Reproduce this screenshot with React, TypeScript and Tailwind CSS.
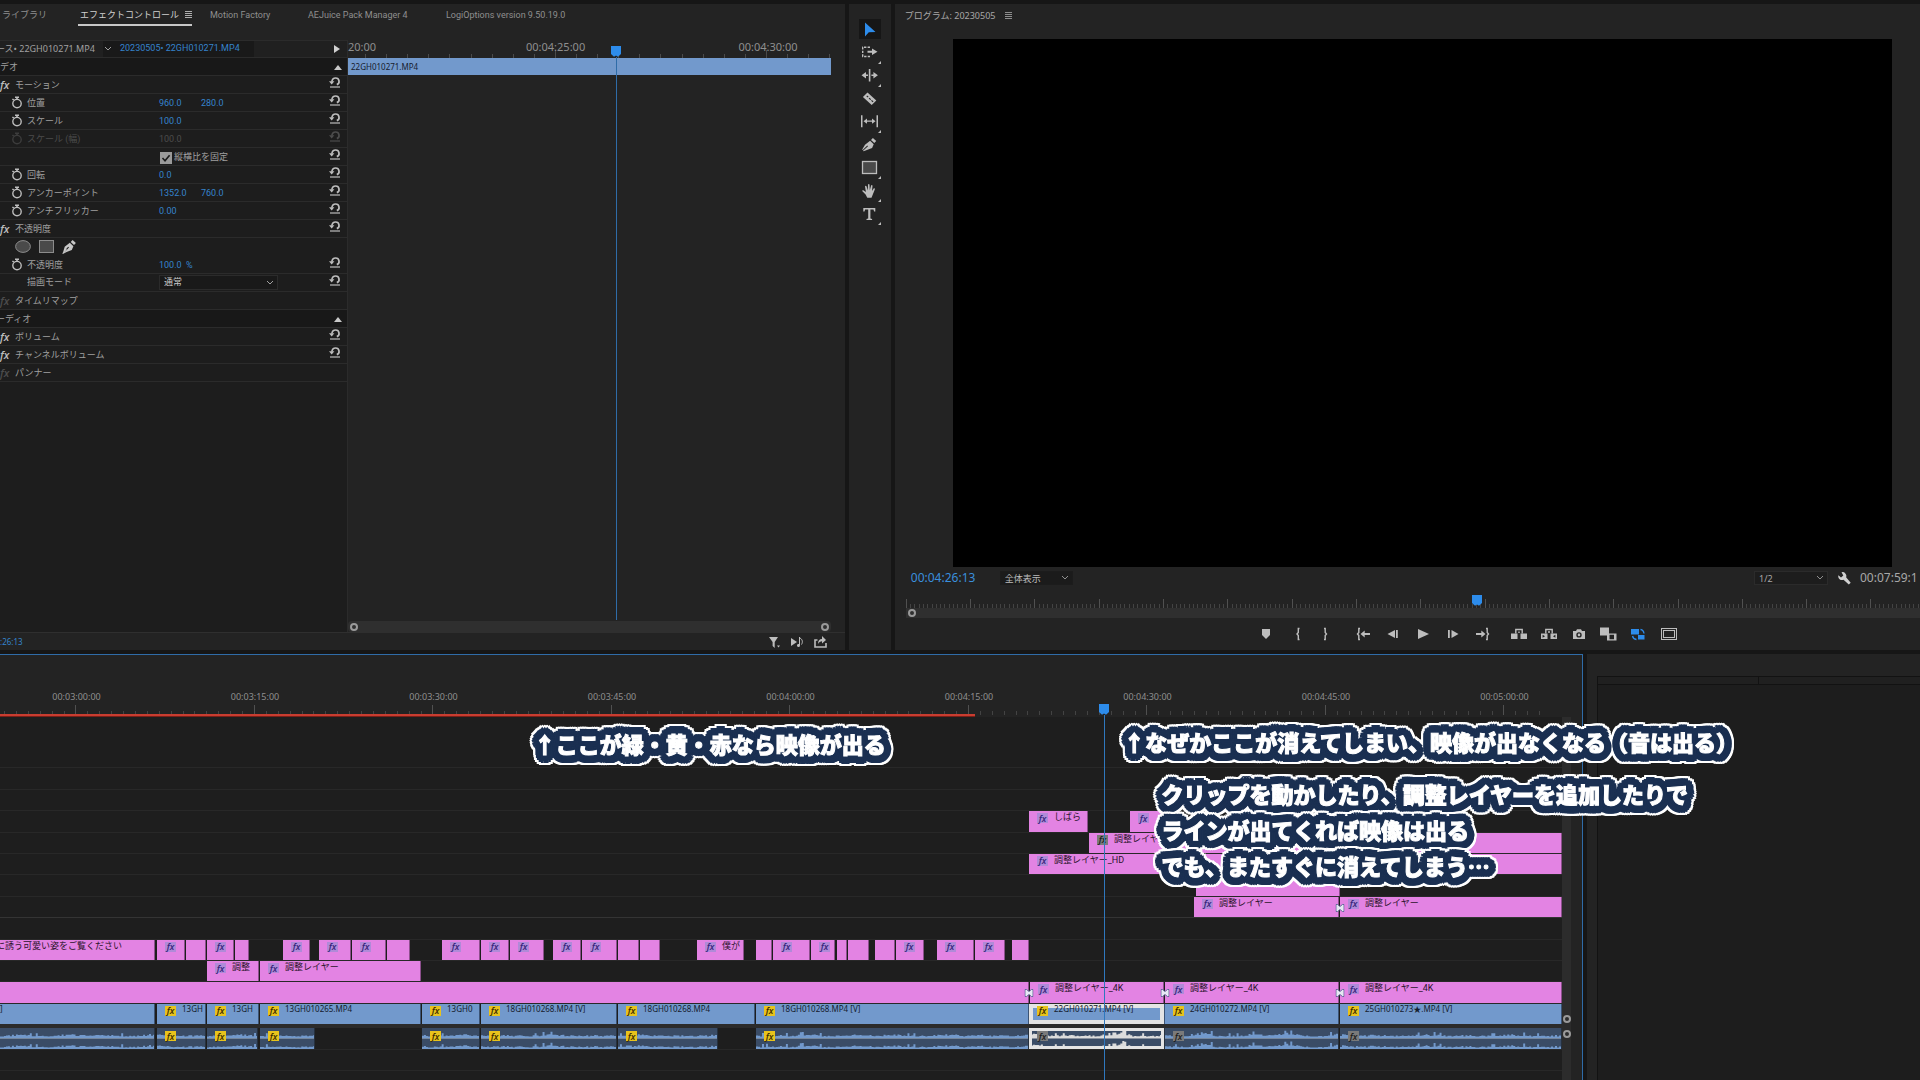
import React from 'react';

type Badge = 'violet' | 'yellow' | 'gray';

interface Clip {
  from: number;
  to: number;
  label?: string;
  badge?: Badge;
  selected?: boolean;
}

interface EffectRow {
  label?: string;
  kind: 'section' | 'effect' | 'param' | 'check' | 'masks' | 'select';
  values?: string[];
  disabled?: boolean;
  noReset?: boolean;
}

// Length of the visible part of the sequence, in timeline units
const SPAN = 1562;
const pct = (value: number) => `${(value / SPAN) * 100}%`;

const EFFECT_ROWS: EffectRow[] = [
  { kind: 'section', label: 'デオ' },
  { kind: 'effect', label: 'モーション' },
  { kind: 'param', label: '位置', values: ['960.0', '280.0'] },
  { kind: 'param', label: 'スケール', values: ['100.0'] },
  { kind: 'param', label: 'スケール (幅)', values: ['100.0'], disabled: true },
  { kind: 'check', label: '縦横比を固定' },
  { kind: 'param', label: '回転', values: ['0.0'] },
  { kind: 'param', label: 'アンカーポイント', values: ['1352.0', '760.0'] },
  { kind: 'param', label: 'アンチフリッカー', values: ['0.00'] },
  { kind: 'effect', label: '不透明度' },
  { kind: 'masks' },
  { kind: 'param', label: '不透明度', values: ['100.0  %'] },
  { kind: 'select', label: '描画モード' },
  { kind: 'effect', label: 'タイムリマップ', disabled: true, noReset: true },
  { kind: 'section', label: 'ーディオ' },
  { kind: 'effect', label: 'ボリューム' },
  { kind: 'effect', label: 'チャンネルボリューム' },
  { kind: 'effect', label: 'パンナー', disabled: true, noReset: true },
];

const VIDEO_TRACKS: Clip[][] = [
  [],
  [],
  [
    { from: 1029, to: 1088, label: 'しばら', badge: 'violet' },
    { from: 1130, to: 1170, badge: 'violet' },
  ],
  [{ from: 1089, to: 1562, label: '調整レイヤー', badge: 'gray' }],
  [{ from: 1029, to: 1562, label: '調整レイヤー_HD', badge: 'violet' }],
  [{ from: 1196, to: 1340 }],
  [
    { from: 1194, to: 1339, label: '調整レイヤー', badge: 'violet' },
    { from: 1340, to: 1562, label: '調整レイヤー', badge: 'violet' },
  ],
  [],
  [
    { from: 0, to: 155, label: 'に誘う可愛い姿をご覧ください' },
    { from: 157, to: 185, badge: 'violet' },
    { from: 186, to: 206 },
    { from: 207, to: 234, badge: 'violet' },
    { from: 235, to: 249 },
    { from: 283, to: 310, badge: 'violet' },
    { from: 319, to: 351, badge: 'violet' },
    { from: 352, to: 386, badge: 'violet' },
    { from: 387, to: 410 },
    { from: 442, to: 480, badge: 'violet' },
    { from: 481, to: 509, badge: 'violet' },
    { from: 510, to: 544, badge: 'violet' },
    { from: 553, to: 581, badge: 'violet' },
    { from: 582, to: 617, badge: 'violet' },
    { from: 618, to: 639 },
    { from: 640, to: 660 },
    { from: 697, to: 744, label: '僕が', badge: 'violet' },
    { from: 756, to: 772 },
    { from: 773, to: 810, badge: 'violet' },
    { from: 811, to: 835, badge: 'violet' },
    { from: 837, to: 847 },
    { from: 848, to: 869 },
    { from: 875, to: 895 },
    { from: 896, to: 924, badge: 'violet' },
    { from: 937, to: 974, badge: 'violet' },
    { from: 975, to: 1005, badge: 'violet' },
    { from: 1012, to: 1029 },
  ],
  [
    { from: 207, to: 259, label: '調整', badge: 'violet' },
    { from: 260, to: 421, label: '調整レイヤー', badge: 'violet' },
  ],
  [
    { from: 0, to: 1029 },
    { from: 1030, to: 1164, label: '調整レイヤー_4K', badge: 'violet' },
    { from: 1165, to: 1339, label: '調整レイヤー_4K', badge: 'violet' },
    { from: 1340, to: 1562, label: '調整レイヤー_4K', badge: 'violet' },
  ],
  [
    { from: 0, to: 155, label: ']' },
    { from: 157, to: 206, label: '13GH', badge: 'yellow' },
    { from: 207, to: 259, label: '13GH', badge: 'yellow' },
    { from: 260, to: 421, label: '13GH010265.MP4', badge: 'yellow' },
    { from: 422, to: 480, label: '13GH0', badge: 'yellow' },
    { from: 481, to: 617, label: '18GH010268.MP4 [V]', badge: 'yellow' },
    { from: 618, to: 755, label: '18GH010268.MP4', badge: 'yellow' },
    { from: 756, to: 1029, label: '18GH010268.MP4 [V]', badge: 'yellow' },
    { from: 1029, to: 1165, label: '22GH010271.MP4 [V]', badge: 'yellow', selected: true },
    { from: 1165, to: 1339, label: '24GH010272.MP4 [V]', badge: 'yellow' },
    { from: 1340, to: 1562, label: '25GH010273★.MP4 [V]', badge: 'yellow' },
  ],
];

const AUDIO_CLIPS: Clip[] = [
  { from: 0, to: 155 },
  { from: 157, to: 206, badge: 'yellow' },
  { from: 207, to: 258, badge: 'yellow' },
  { from: 260, to: 315, badge: 'yellow' },
  { from: 422, to: 480, badge: 'yellow' },
  { from: 481, to: 617, badge: 'yellow' },
  { from: 618, to: 718, badge: 'yellow' },
  { from: 756, to: 1029, badge: 'yellow' },
  { from: 1029, to: 1165, badge: 'gray', selected: true },
  { from: 1165, to: 1339, badge: 'gray' },
  { from: 1340, to: 1562, badge: 'gray' },
];

const TRANSITIONS = [
  { track: 6, at: 1340 },
  { track: 10, at: 1029 },
  { track: 10, at: 1165 },
  { track: 10, at: 1340 },
];

const TIME_LABELS = [
  '00:03:00:00',
  '00:03:15:00',
  '00:03:30:00',
  '00:03:45:00',
  '00:04:00:00',
  '00:04:15:00',
  '00:04:30:00',
  '00:04:45:00',
  '00:05:00:00',
];

/* ---------- icons ---------- */

const Svg: React.FC<{ w: number; h: number; className?: string; children: React.ReactNode }> = ({ w, h, className, children }) => (
  <svg width={w} height={h} viewBox={`0 0 ${w} ${h}`} className={`block shrink-0 ${className ?? ''}`} fill="currentColor" aria-hidden="true">
    {children}
  </svg>
);

const Chevron = () => (
  <Svg w={8} h={6}>
    <path d="M1 1l3 3 3-3" fill="none" stroke="currentColor" />
  </Svg>
);

const MenuIcon = () => (
  <Svg w={7} h={8}>
    <path d="M0 .5h7M0 2.5h7M0 4.5h7M0 6.5h7" stroke="currentColor" strokeWidth=".8" />
  </Svg>
);

const Stopwatch = () => (
  <Svg w={12} h={13}>
    <circle cx="6" cy="7.6" r="4.2" fill="none" stroke="currentColor" strokeWidth="1.4" />
    <path d="M4 .6h4v1.4H6.8v1.6H5.2V2H4zM.9 3.4l1-1 1.4 1.2-1 1z" />
  </Svg>
);

const ResetIcon = () => (
  <Svg w={12} h={11}>
    <path d="M2.8 4.6C3.2 2.2 4.8 1 6.6 1a3.4 3.4 0 0 1 1.2 6.6" fill="none" stroke="currentColor" strokeWidth="1.7" />
    <path d="M0 4.2h5.4L2.7 7.4z" />
    <path d="M1 10h10" stroke="currentColor" strokeWidth="1.2" />
  </Svg>
);

const PenIcon = () => (
  <Svg w={14} h={14}>
    <path d="M8.7 1.9L10.6 0l3.3 3.1-1.9 2z" />
    <path d="M7.8 2.7l3.6 3.5-1.6 3.7-5.2 2.2L.9 13.9l-.6-.6L4.2 9l.6.6-3 3.3L7 7.6 6.2 6.8 1 12.4l1.7-5.7z" />
  </Svg>
);

const PlayheadMark: React.FC<{ className?: string }> = ({ className }) => (
  <Svg w={10} h={11} className={className}>
    <path d="M0 0h10v8L7 10.8 5 9.4 3 10.8 0 8z" />
  </Svg>
);

const TOOLS: { name: string; icon: React.ReactNode; menu?: boolean }[] = [
  { name: '選択ツール', icon: <path d="M4 2.5v14l3.8-4.3 6.7-.2z" /> },
  {
    name: 'トラックの前方選択ツール',
    menu: true,
    icon: (
      <>
        <path d="M9 4.2H1.7v9.3H9" fill="none" stroke="currentColor" strokeWidth="1.4" strokeDasharray="2.4 1.2" />
        <path d="M6.5 7.8H11V5.5l5.5 3.3-5.5 3.3V9.8H6.5z" />
      </>
    ),
  },
  {
    name: 'リップルツール',
    menu: true,
    icon: <path d="M7.8 3h1.6v12.5H7.8zM.5 9.2L5 6v2.4h2V10H5v2.4zM16.9 9.2L12.4 6v2.4h-2V10h2v2.4z" />,
  },
  {
    name: 'レーザーツール',
    icon: <path fillRule="evenodd" d="M1.9 8L6.5 3.5l8.8 8-4.6 4.6zM5.3 7.2l1.5 1.4.8-.8-1.5-1.4zM7.7 9.5l1.6 1.5.8-.8-1.6-1.5zM10.1 11.8l1.6 1.5.8-.8-1.6-1.5z" />,
  },
  {
    name: 'スリップツール',
    menu: true,
    icon: <path d="M0 3.3h1.5v12H0zM15.5 3.3H17v12h-1.5zM2.5 9.2L6 6.6v2h5v-2l3.5 2.6-3.5 2.6v-2H6v2z" />,
  },
  {
    name: 'ペンツール',
    icon: (
      <>
        <path d="M10 4.9L11.9 3l3.3 3.1-1.9 2z" />
        <path d="M9.1 5.7l3.6 3.5-1.6 3.7-5.2 2.2-3.3 1.2-.6-.6L7 11.3l-.7-.7L1.7 15l-.5-.5L4 9.7z" />
      </>
    ),
  },
  {
    name: '長方形ツール',
    menu: true,
    icon: <rect x="1.5" y="3.5" width="14" height="12" fill="#4a4a4a" stroke="currentColor" strokeWidth="1.3" />,
  },
  {
    name: '手のひらツール',
    menu: true,
    icon: <path d="M6.3 16.8L4.6 13.6 1.4 10.3c-.5-.8.5-1.5 1.3-.9l2.2 1.7L4 5.5c0-1 1.2-1.2 1.5-.2l1.3 4.2.2-5.7c.1-1 1.4-1 1.5 0l.3 5.5 1.3-4.7c.3-.9 1.5-.7 1.4.3l-.5 5 1.5-2.2c.6-.8 1.7-.2 1.3.7l-2 5-1.3 3.4z" />,
  },
  {
    name: '横書き文字ツール',
    menu: true,
    icon: <path d="M2.3 4h12v3.6h-1.2l-.6-2.1H9.4v9l1.7.4V16H5.5v-1.1l1.7-.4v-9H4.1l-.6 2.1H2.3z" />,
  },
];

const TRANSPORT: { name: string; icon: React.ReactNode; gap: string; active?: boolean }[] = [
  { name: 'マーカーを追加', gap: '', icon: <path d="M5 4h8v6l-4 4-4-4z" /> },
  { name: 'インをマーク', gap: 'ml-3.5', icon: <path d="M10.5 3.5H9.3v4L8 9l1.3 1.5v4h1.2" fill="none" stroke="currentColor" strokeWidth="1.4" /> },
  { name: 'アウトをマーク', gap: 'ml-2.5', icon: <path d="M7 3.5h1.2v4L9.5 9l-1.3 1.5v4H7" fill="none" stroke="currentColor" strokeWidth="1.4" /> },
  {
    name: 'インへ移動',
    gap: 'ml-5',
    icon: (
      <>
        <path d="M5 3.5H3.8v4L2.5 9l1.3 1.5v4H5" fill="none" stroke="currentColor" strokeWidth="1.4" />
        <path d="M5.5 9l4.2-3.5V8H15v2H9.7v2.5z" />
      </>
    ),
  },
  { name: '1フレーム前へ戻る', gap: 'ml-[11px]', icon: <path d="M3.5 9L11 5v8zM12 5h1.8v8H12z" /> },
  { name: '再生', gap: 'ml-3', icon: <path d="M4 4l11 5-11 5z" /> },
  { name: '1フレーム先へ進む', gap: 'ml-3', icon: <path d="M14.5 9l-7-4v8zM4 5h1.8v8H4z" /> },
  {
    name: 'アウトへ移動',
    gap: 'ml-[11px]',
    icon: (
      <>
        <path d="M13 3.5h1.2v4L15.5 9l-1.3 1.5v4H13" fill="none" stroke="currentColor" strokeWidth="1.4" />
        <path d="M12.5 9L8.3 5.5V8H3v2h5.3v2.5z" />
      </>
    ),
  },
  {
    name: 'リフト',
    gap: 'ml-[19px]',
    icon: (
      <>
        <path d="M1 8.5h6.5V14H1zM10.5 8.5H17V14h-6.5z" />
        <path d="M5.8 8.5v-4h6.4v4M9 6.5V8" fill="none" stroke="currentColor" strokeWidth="1.4" />
      </>
    ),
  },
  {
    name: '抽出',
    gap: 'ml-3',
    icon: (
      <>
        <path fillRule="evenodd" d="M1 8.5h6.5V14H1zM2.6 9.8v3L5 11.3zM10.5 8.5H17V14h-6.5zM15.4 9.8v3L13 11.3z" />
        <path d="M5.8 8.5v-4h6.4v4M8 7h2" fill="none" stroke="currentColor" strokeWidth="1.4" />
      </>
    ),
  },
  {
    name: 'フレームを書き出し',
    gap: 'ml-3',
    icon: <path fillRule="evenodd" d="M3 6h3l1-1.800h4L12 6h3v8H3zM9 7.200a2.700 2.700 0 1 0 0 5.400 2.700 2.700 0 0 0 0-5.400zM9 8.600a1.300 1.300 0 1 1 0 2.600 1.300 1.300 0 0 1 0-2.600z" />,
  },
  {
    name: '比較表示',
    gap: 'ml-[11px]',
    icon: (
      <>
        <path d="M1 2.5h9v8H1z" />
        <path fillRule="evenodd" d="M8 8.5h9.5v7H8zM10.5 9.8v4.4H15V9.8z" />
      </>
    ),
  },
  {
    name: 'プロキシの切り替え',
    gap: 'ml-3',
    active: true,
    icon: (
      <>
        <path d="M2 4h8v5.5H2zM9 10h6.5v4.5H9z" />
        <path d="M11.5 4.5c2 .3 3.2 1.6 3.5 4M3.5 11c.4 2 1.7 3.2 4 3.5" fill="none" stroke="currentColor" strokeWidth="1.3" />
      </>
    ),
  },
  {
    name: 'セーフマージン',
    gap: 'ml-[13px]',
    icon: (
      <>
        <rect x="1.5" y="3.5" width="15" height="11" fill="none" stroke="currentColor" />
        <rect x="3.5" y="5.5" width="11" height="7" fill="none" stroke="currentColor" />
      </>
    ),
  },
];

/* ---------- effect controls ---------- */

const EffectRowView: React.FC<{ row: EffectRow }> = ({ row }) => {
  const hasReset = row.kind !== 'section' && row.kind !== 'masks' && !row.noReset;
  const border = row.kind === 'masks' ? 'border-transparent' : 'border-[#2b2b2b]';
  return (
    <div className={`relative flex h-[18px] items-center border-b pt-0.5 ${border} ${row.kind === 'section' ? 'bg-[#181818]' : ''}`}>
      {row.kind === 'section' && (
        <>
          <span className={`flex-1 ${row.label === 'デオ' ? '' : '-ml-1'}`}>{row.label}</span>
          <Svg w={8} h={5} className="mr-[5px] text-[#c8c8c8]">
            <path d="M4 0l4 5H0z" />
          </Svg>
        </>
      )}
      {row.kind === 'effect' && (
        <>
          <i className={`w-[15px] font-['Open_Sans',sans-serif] text-[11px] font-semibold ${row.disabled ? 'text-[#4c4c4c]' : 'text-[#bdbdbd]'}`}>fx</i>
          <span>{row.label}</span>
        </>
      )}
      {row.kind === 'param' && (
        <>
          <button type="button" aria-label={`${row.label} アニメーションのオン/オフ`} className={`mb-0.5 ml-[11px] w-4 ${row.disabled ? 'text-[#3c3c3c]' : 'text-[#bdbdbd]'}`}>
            <Stopwatch />
          </button>
          <span className={`w-[132px] ${row.disabled ? 'text-[#4c4c4c]' : ''}`}>{row.label}</span>
          {row.values?.map((value) => (
            <span key={value} className={`w-[42px] whitespace-pre ${row.disabled ? 'text-[#4c4c4c]' : 'text-[#3583cc]'}`}>
              {value}
            </span>
          ))}
        </>
      )}
      {row.kind === 'check' && (
        <label className="ml-40 flex items-center gap-0.5">
          <span className="relative block size-3">
            <input type="checkbox" defaultChecked className="block size-3 appearance-none bg-[#9a9a9a]" />
            <svg viewBox="0 0 12 12" className="pointer-events-none absolute inset-0" fill="none" stroke="#1a1a1a" strokeWidth="1.6" aria-hidden="true">
              <path d="M2.5 6L5 8.7l4.6-5.5" />
            </svg>
          </span>
          {row.label}
        </label>
      )}
      {row.kind === 'masks' && (
        <div className="mb-0.5 ml-[15px] flex items-center gap-2 text-[#c8c8c8]">
          <button type="button" aria-label="楕円形マスクの作成">
            <Svg w={16} h={13}>
              <ellipse cx="8" cy="6.5" rx="7.4" ry="5.9" fill="#4a4a4a" stroke="#8c8c8c" />
            </Svg>
          </button>
          <button type="button" aria-label="4点の長方形マスクの作成">
            <Svg w={15} h={13}>
              <rect x=".5" y=".5" width="14" height="12" fill="#4a4a4a" stroke="#8c8c8c" />
            </Svg>
          </button>
          <button type="button" aria-label="ベジェのペンマスクの作成">
            <PenIcon />
          </button>
        </div>
      )}
      {row.kind === 'select' && (
        <label className="mb-0.5 flex items-center">
          <span className="ml-[27px] w-[132px]">{row.label}</span>
          <span className="relative flex w-[119px] items-center">
            <select className="h-[15px] w-full appearance-none border border-[#2b2b2b] bg-[#191919] pl-1 text-[9px] text-[#c8c8c8]">
              <option>通常</option>
            </select>
            <span className="pointer-events-none absolute right-1">
              <Chevron />
            </span>
          </span>
        </label>
      )}
      {hasReset && (
        <button type="button" aria-label="リセット" className={`mr-1.5 mb-1.5 ml-auto ${row.disabled ? 'text-[#4c4c4c]' : 'text-[#bdbdbd]'}`}>
          <ResetIcon />
        </button>
      )}
    </div>
  );
};

const EffectControls = () => (
  <section className="flex w-[44%] flex-col overflow-hidden bg-[#232323]">
    <nav className="flex h-9 items-start leading-[22px] whitespace-nowrap text-[#8f8f8f]">
      <button type="button" className="ml-0.5 w-[76px] text-left">ライブラリ</button>
      <button type="button" className="flex h-[22px] w-[114px] items-center gap-1.5 border-b-2 border-[#c8c8c8] pt-0.5 pl-0.5 text-[#d0d0d0]">
        エフェクトコントロール
        <MenuIcon />
      </button>
      <button type="button" className="ml-[18px] w-[98px] text-left">Motion Factory</button>
      <button type="button" className="w-[138px] text-left">AEJuice Pack Manager 4</button>
      <button type="button">LogiOptions version 9.50.19.0</button>
    </nav>

    <div className="flex flex-1">
      <div className="flex w-[348px] shrink-0 flex-col overflow-hidden border-r border-[#2b2b2b] bg-[#1d1d1d]">
        <div className="flex h-[18px] items-center border-y border-[#2b2b2b] bg-[#202020] whitespace-nowrap">
          <span className="-ml-1 w-[107px] font-['Noto_Sans','Noto_Sans_CJK_JP',sans-serif]">ース• 22GH010271.MP4</span>
          <div className="flex h-full w-[151px] items-center gap-2 bg-[#191919] pl-px">
            <Chevron />
            <span className="text-[#3583cc]">20230505• 22GH010271.MP4</span>
          </div>
          <Svg w={6} h={8} className="mr-[7px] ml-auto text-[#d0d0d0]">
            <path d="M0 0l6 4-6 4z" />
          </Svg>
        </div>
        {EFFECT_ROWS.map((row, i) => (
          <EffectRowView key={i} row={row} />
        ))}
      </div>

      <div className="relative flex flex-1 flex-col pr-3.5">
        <div className="relative h-[18px] overflow-hidden font-['Noto_Sans',sans-serif] text-[11px] leading-[14px] text-[#8f8f8f]">
          {Array.from({ length: 23 }, (_, i) => (
            <span
              key={i}
              className={`absolute bottom-0 w-px bg-[#4a4a4a] ${i === 9 || i === 19 ? 'h-2' : 'h-1'}`}
              style={{ left: `${((17 + i * 21.07) / 482) * 100}%` }}
            />
          ))}
          <span className="absolute top-0 left-0">20:00</span>
          <span className="absolute top-0 left-[43%] -translate-x-1/2">00:04:25:00</span>
          <span className="absolute top-0 left-[87%] -translate-x-1/2">00:04:30:00</span>
        </div>
        <div className="flex h-[17px] items-center bg-[#7299cc] pl-[3px] font-['Noto_Sans',sans-serif] text-[8px] text-[#16202e]">22GH010271.MP4</div>
        <div className="flex-1" />
        <div className="flex h-[11px] items-center justify-between rounded-sm bg-[#2f2f2f] px-0.5">
          <span className="size-2 rounded-full border-2 border-[#9a9a9a]" />
          <span className="size-2 rounded-full border-2 border-[#9a9a9a]" />
        </div>
        <div className="absolute inset-y-0 left-[53%] flex w-2.5 flex-col items-center pt-1.5 pb-3 text-[#2d8ceb]">
          <PlayheadMark />
          <span className="w-px flex-1 bg-[#2f6ca8]" />
        </div>
      </div>
    </div>

    <footer className="flex h-[18px] items-center justify-between border-t border-[#2f2f2f] pr-[18px] text-[#bdbdbd]">
      <span className="font-['Noto_Sans',sans-serif] text-[8px] text-[#3583cc]">:26:13</span>
      <div className="flex items-center gap-[11px]">
        <button type="button" aria-label="プロパティをフィルター">
          <Svg w={12} h={12}>
            <path d="M1 1h9L6.7 6v6l-2.100-2V6zM9 9.500h3L10.500 11.500z" />
          </Svg>
        </button>
        <button type="button" aria-label="オーディオを再生">
          <Svg w={12} h={10}>
            <path d="M0 1l6 4-6 4zM8 0h1v8.500a1.500 1.500 0 1 1-1-1.400z" />
            <path d="M9 1c2.500 1.500 3 4 1.500 6.500" fill="none" stroke="currentColor" />
          </Svg>
        </button>
        <button type="button" aria-label="書き出し">
          <Svg w={13} h={12}>
            <path d="M3.5 4H1v7h11V7" fill="none" stroke="currentColor" strokeWidth="1.6" />
            <path d="M4 8c0-3.500 1.500-5 4-5V0l4 4-4 3.500V5.200C6.300 5.200 5 6 4 8z" />
          </Svg>
        </button>
      </div>
    </footer>
  </section>
);

/* ---------- tools ---------- */

const Toolbar = () => (
  <aside className="flex w-[42px] shrink-0 flex-col items-center bg-[#232323] pt-[15px]">
    {TOOLS.map((tool, i) => (
      <button
        key={tool.name}
        type="button"
        aria-label={tool.name}
        className={`relative mb-[3px] flex h-5 w-[22px] items-center justify-center ${i === 0 ? 'bg-[#161616] text-[#2d8ceb]' : 'text-[#bdbdbd]'}`}
      >
        <Svg w={18} h={18}>{tool.icon}</Svg>
        {tool.menu && (
          <Svg w={3} h={3} className="absolute right-0 -bottom-0.5">
            <path d="M3 0v3H0z" />
          </Svg>
        )}
      </button>
    ))}
  </aside>
);

/* ---------- program monitor ---------- */

const ProgramMonitor = () => (
  <section className="flex min-w-0 flex-1 flex-col overflow-hidden bg-[#232323]">
    <h2 className="flex h-[35px] items-start gap-2.5 pl-2.5 text-[#a8a8a8]">
      <span className="font-['Noto_Sans','Noto_Sans_CJK_JP',sans-serif] leading-[23px]">プログラム: 20230505</span>
      <span className="mt-2">
        <MenuIcon />
      </span>
    </h2>
    <div className="mr-7 ml-[58px] aspect-video bg-black" />

    <div className="flex h-[22px] items-center font-['Noto_Sans','Noto_Sans_CJK_JP',sans-serif]">
      <span className="ml-4 w-[89px] text-[12px] text-[#3a8fdd]">00:04:26:13</span>
      <span className="relative flex w-[73px] items-center">
        <select aria-label="ズームレベルを選択" className="h-3.5 w-full appearance-none border border-[#1c1c1c] bg-[#1b1b1b] pl-1 text-[9px] text-[#bdbdbd]">
          <option>全体表示</option>
        </select>
        <span className="pointer-events-none absolute right-1 text-[#8f8f8f]">
          <Chevron />
        </span>
      </span>
      <span className="relative ml-auto flex w-[74px] items-center">
        <select aria-label="再生時の解像度" className="h-3.5 w-full appearance-none border border-[#2b2b2b] bg-[#1d1d1d] pl-1 text-[9px] text-[#a8a8a8]">
          <option>1/2</option>
        </select>
        <span className="pointer-events-none absolute right-1 text-[#8f8f8f]">
          <Chevron />
        </span>
      </span>
      <button type="button" aria-label="設定" className="ml-2.5 text-[#d0d0d0]">
        <Svg w={13} h={13}>
          <path d="M3.5.3a3.800 3.800 0 0 1 4.600 5l4.600 5.400-1.900 1.900-5.300-4.800A3.800 3.800 0 0 1 .4 3.300L3 5.400l2.300-1.800z" />
        </Svg>
      </button>
      <span className="ml-[9px] w-[60px] overflow-hidden text-[12px] whitespace-nowrap text-[#a8a8a8]">00:07:59:1</span>
    </div>

    <div className="relative ml-[11px] h-[19px] overflow-hidden">
      {Array.from({ length: 237 }, (_, i) => (
        <span
          key={i}
          className={`absolute bottom-0 w-px ${i % 15 === 0 ? 'h-[9px] bg-[#505050]' : 'h-1 bg-[#434343]'}`}
          style={{ left: `${((i * 64.3) / 15 / 1014) * 100}%` }}
        />
      ))}
      <PlayheadMark className="absolute bottom-0.5 left-[55.8%] text-[#2d8ceb]" />
    </div>
    <div className="ml-[11px] flex h-2.5 items-center bg-[#2f2f2f] pl-0.5">
      <span className="size-2 rounded-full border-2 border-[#9a9a9a]" />
    </div>

    <div className="flex h-8 items-center overflow-hidden pl-[362px] text-[#bdbdbd]">
      {TRANSPORT.map((control) => (
        <button key={control.name} type="button" aria-label={control.name} className={`${control.gap} ${control.active ? 'text-[#2d8ceb]' : ''}`}>
          <Svg w={18} h={18}>{control.icon}</Svg>
        </button>
      ))}
    </div>
  </section>
);

/* ---------- timeline ---------- */

const BADGE_STYLES: Record<Badge, string> = {
  violet: 'bg-[#b08ad8] text-[#35247a]',
  yellow: 'bg-[#e8c31c] text-[#3a2c00]',
  gray: 'bg-[#7a7a7a] text-[#1c1c1c]',
};

const FxBadge: React.FC<{ tone: Badge }> = ({ tone }) => (
  <i className={`ml-2 flex h-2.5 w-[11px] shrink-0 items-center justify-center font-['Open_Sans',sans-serif] text-[9px] leading-[9px] font-semibold ${BADGE_STYLES[tone]}`}>
    fx
  </i>
);

const Waveform: React.FC<{ clip: Clip }> = ({ clip }) => {
  const width = clip.to - clip.from;
  const quiet = clip.from < 1000 || clip.from === 1340;
  // cheap repeatable noise, seeded by the clip position
  const level = (x: number) => {
    const t = clip.from + x;
    const n = Math.abs(Math.sin(t * 12.9898) * 43758.5453) % 1;
    const swell = Math.max(0, Math.sin(t / 9) * Math.sin(t / 31) + 0.2);
    const spike = n > 0.96 ? 2 : 0;
    return 1.4 + n * 1.4 + spike + swell * (quiet ? 1.4 : 3.2) * (0.4 + n * 0.6);
  };
  const channel = (base: number) => {
    let d = `M0 ${base}`;
    for (let x = 0; x <= width; x += 2) d += `V${(base - level(x)).toFixed(1)}H${x + 2}`;
    return `${d}V${base}z`;
  };
  return (
    <svg viewBox={`0 0 ${width} 21`} preserveAspectRatio="none" className="absolute inset-0 size-full" aria-hidden="true">
      <path d={channel(10)} fill={clip.selected ? '#dcdcdc' : '#7299cc'} />
      <path d={channel(21)} fill={clip.selected ? '#dcdcdc' : '#7299cc'} />
      <path d={`M0 10.5H${width}`} stroke={clip.selected ? '#8a93a0' : '#74879e'} />
    </svg>
  );
};

const TimelineRuler = () => (
  <div className="relative h-[62px] bg-[#232323] font-['Noto_Sans',sans-serif] text-[9px] text-[#8f8f8f]">
    {Array.from({ length: 130 }, (_, i) => (
      <span
        key={i}
        className={`absolute bottom-0.5 w-px ${i % 15 === 6 ? 'h-2.5 bg-[#505050]' : 'h-1 bg-[#434343]'}`}
        style={{ left: pct(4 + i * 11.9) }}
      />
    ))}
    {TIME_LABELS.map((label, i) => (
      <span key={label} className="absolute bottom-3 -translate-x-1/2 leading-4" style={{ left: pct(76.5 + i * 178.5) }}>
        {label}
      </span>
    ))}
    {/* render bar: red until the cache runs out */}
    <div className="absolute bottom-0 left-0 h-[3px] w-[62.4%] border-b border-[#7a1f18] bg-[#c93d30]" />
  </div>
);

const Timeline = () => (
  <section className="flex min-w-0 flex-1 flex-col overflow-hidden border-t border-r border-[#2f6ca8] bg-[#1e1e1e]">
    <div className="flex flex-1">
      <div className="relative flex min-w-0 flex-1 flex-col">
        <TimelineRuler />
        <div className="h-[50px]" />
        <div className="grid h-[257px] grid-rows-12">
          {VIDEO_TRACKS.map((clips, track) => (
            <div key={track} className={`relative border-t ${track === 7 ? 'border-[#343434]' : 'border-[#282828]'}`}>
              {clips.map((clip) => (
                <div
                  key={clip.from}
                  className={`absolute inset-y-0 flex items-start overflow-hidden border-r whitespace-nowrap ${
                    track === 11 ? 'border-[#3c5475] bg-[#7299cc] text-[#16202e]' : 'border-[#8c4f8c] bg-[#e383e3] text-[#2c142c]'
                  }`}
                  style={{ left: pct(clip.from), width: pct(clip.to - clip.from) }}
                >
                  {clip.selected && <span className="absolute inset-0 border-4 border-[#e4e4e4]" />}
                  <span className="relative flex items-start">
                    {clip.badge && (
                      <span className="pt-0.5">
                        <FxBadge tone={clip.badge} />
                      </span>
                    )}
                    {clip.label && (
                      <span
                        className={`${clip.badge ? 'ml-1.5' : clip.label.length > 1 ? '-ml-1' : ''} ${
                          track === 11 ? "font-['Noto_Sans','Noto_Sans_CJK_JP',sans-serif] text-[8px] leading-[10px]" : 'text-[9px] leading-3'
                        }`}
                      >
                        {clip.label}
                      </span>
                    )}
                  </span>
                </div>
              ))}
              {TRANSITIONS.filter((t) => t.track === track).map((t) => (
                <svg key={t.at} viewBox="0 0 9 8" className="absolute top-[7px] z-10 h-2 w-[9px] -translate-x-1/2" style={{ left: pct(t.at) }} aria-hidden="true">
                  <path d="M.5.5H2l2.500 2 2.500-2h1.500v7H7l-2.500-2-2.500 2H.5z" fill="#e8e8f4" stroke="#4a5a8c" strokeWidth=".8" />
                </svg>
              ))}
            </div>
          ))}
        </div>
        <div className="h-1 bg-[#2b2b2b]" />
        <div className="relative h-[21px]">
          {AUDIO_CLIPS.map((clip) => (
            <div
              key={clip.from}
              className="absolute inset-y-0 overflow-hidden border-r border-[#26313f] bg-[#3a4c66]"
              style={{ left: pct(clip.from), width: pct(clip.to - clip.from) }}
            >
              <Waveform clip={clip} />
              {clip.selected && <span className="absolute inset-0 border-3 border-[#e4e4e4]" />}
              {clip.badge && (
                <span className="relative flex pt-[3px]">
                  <FxBadge tone={clip.badge} />
                </span>
              )}
            </div>
          ))}
        </div>
        <div className="h-[22px] border-y border-[#282828]" />

        {/* playhead */}
        <div className="absolute inset-y-0 flex w-2.5 -translate-x-1/2 flex-col items-center pt-[49px] text-[#2d8ceb]" style={{ left: pct(1104) }}>
          <PlayheadMark />
          <span className="w-px flex-1 bg-[#2f78be]" />
        </div>
      </div>

      <div className="flex w-5 shrink-0 flex-col bg-[#232323]">
        <div className="h-[62px]" />
        <div className="flex w-[9px] flex-1 flex-col items-center bg-[#2c2c2c]">
          <div className="h-[298px]" />
          <span className="size-2 rounded-full border-2 border-[#9a9a9a]" />
          <span className="mt-[7px] size-2 rounded-full border-2 border-[#9a9a9a]" />
        </div>
      </div>
    </div>
  </section>
);

const SidePanel = () => (
  <section className="flex w-[333px] shrink-0 flex-col bg-[#232323] pt-[22px] pl-2.5">
    <div className="flex flex-1 flex-col border-t border-l border-[#121212] bg-[#1d1d1d]">
      <div className="flex h-2 border-b border-[#121212] bg-[#202020]">
        <span className="w-1/2 border-r border-[#121212]" />
      </div>
    </div>
  </section>
);

/* ---------- captions laid over the screen ---------- */

// Round navy outline: copies of the glyphs on rings of growing radius
const OUTLINE = [2, 4, 6, 8]
  .flatMap((r) =>
    Array.from({ length: 20 }, (_, i) => {
      const angle = (i / 20) * Math.PI * 2;
      return `${(Math.cos(angle) * r).toFixed(1)}px ${(Math.sin(angle) * r).toFixed(1)}px 0 #1b3052`;
    }),
  )
  .join(', ');

const CaptionLine: React.FC<{ children: string }> = ({ children }) => (
  <p
    className="h-9 font-['Noto_Sans_CJK_JP',sans-serif] text-[22px] leading-9 font-black whitespace-nowrap text-white [-webkit-text-stroke:1px_#fff] [filter:drop-shadow(2px_0_0_#fff)_drop-shadow(-2px_0_0_#fff)_drop-shadow(0_2px_0_#fff)_drop-shadow(0_-2px_0_#fff)]"
    style={{ textShadow: OUTLINE }}
  >
    {children}
  </p>
);

const App: React.FC = () => {
  return (
    <div lang="ja" className="flex min-h-screen flex-col gap-1 overflow-hidden bg-[#161616] pt-1 font-['Roboto','Noto_Sans_CJK_JP',sans-serif] text-[9px] text-[#a0a0a0]">
      <div className="flex gap-1">
        <EffectControls />
        <Toolbar />
        <ProgramMonitor />
      </div>
      <div className="relative flex flex-1 gap-1">
        <Timeline />
        <SidePanel />
        <div className="absolute top-[71px] left-[27.8%]">
          <CaptionLine>↑ここが緑・黄・赤なら映像が出る</CaptionLine>
        </div>
        <div className="absolute top-[69px] left-[58.5%]">
          <CaptionLine>↑なぜかここが消えてしまい、映像が出なくなる（音は出る）</CaptionLine>
        </div>
        <div className="absolute top-[121px] left-[60.5%]">
          <CaptionLine>クリップを動かしたり、調整レイヤーを追加したりで</CaptionLine>
          <CaptionLine>ラインが出てくれば映像は出る</CaptionLine>
          <CaptionLine>でも、またすぐに消えてしまう…</CaptionLine>
        </div>
      </div>
    </div>
  );
};

export default App;
